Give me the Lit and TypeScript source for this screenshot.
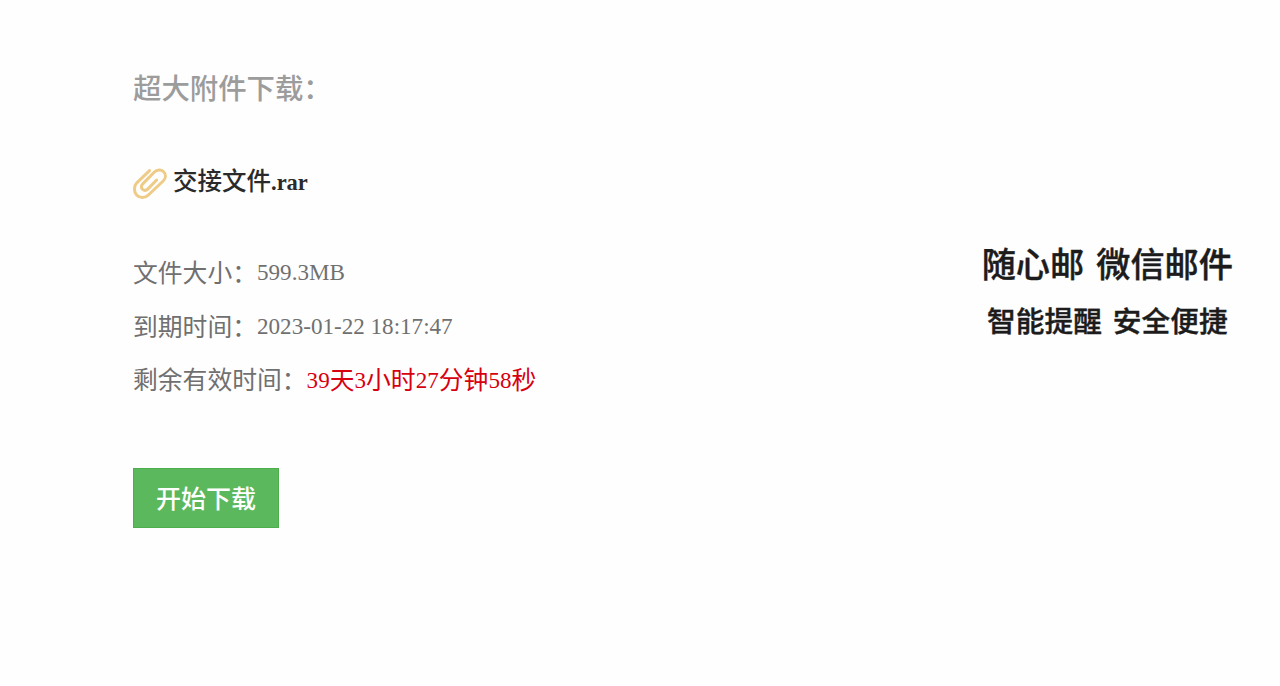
import { LitElement, html, css } from "lit";
import { customElement, property } from "lit/decorators.js";

@customElement("clip-icon")
export class ClipIcon extends LitElement {
  static styles = css`
    :host {
      display: block;
      width: 34px;
      height: 32px;
    }
    svg {
      display: block;
      width: 100%;
      height: 100%;
      fill: none;
      stroke: #eecb86;
      stroke-width: 3;
      stroke-linecap: round;
      stroke-linejoin: round;
    }
  `;

  render() {
    return html`<svg viewBox="0 0 34 32">
      <path
        d="M16.5 2.6L3.8 14.8C0.8 17.9 0.7 23.8 3.6 27C6.6 30.2 12.2 30.2 15.4 27L30.2 13C33 10.2 33.1 6.3 30.6 3.8C28 1.2 24 1.4 21.4 4L10 15.6C8 17.7 8 20 9.6 21.4C11.2 22.8 13.3 22.6 15 20.9L23.6 12"
      />
    </svg>`;
  }
}

@customElement("info-row")
export class InfoRow extends LitElement {
  @property() label = "";

  static styles = css`
    :host {
      display: flex;
      height: 53.5px;
      line-height: 53.5px;
      white-space: nowrap;
    }
  `;

  render() {
    return html`<span>${this.label}：</span><slot></slot>`;
  }
}

@customElement("app-root")
export class AppRoot extends LitElement {
  static styles = css`
    :host {
      display: flex;
      justify-content: space-between;
      box-sizing: border-box;
      height: 686px;
      padding: 65px 47px 0 133px;
      background: #fefefe;
      color: #707070;
      font-family: "Liberation Serif", "Noto Sans CJK SC", serif;
      font-size: 24.8px;
    }
    h1 {
      margin: 0;
      height: 50px;
      line-height: 50px;
      font-size: 28.4px;
      font-weight: 500;
      color: #9c9c9c;
    }
    .file {
      display: flex;
      align-items: center;
      gap: 6px;
      margin-top: 42px;
      height: 50px;
      line-height: 50px;
      font-size: 24.5px;
      font-weight: 500;
      color: #2a2a2a;
    }
    clip-icon {
      margin-top: 4px;
    }
    .ext {
      font-size: 22.5px;
      font-weight: 700;
    }
    .info {
      margin-top: 40px;
    }
    .num {
      position: relative;
      top: -1px;
      font-size: 23.1px;
    }
    .left {
      color: #d7000f;
    }
    button {
      display: block;
      margin-top: 60px;
      width: 146px;
      height: 60px;
      padding: 0 0 2px;
      border: 1px solid #4cae4c;
      background: #5cb85c;
      color: #fff;
      font: inherit;
      font-weight: 500;
      font-size: 25px;
    }
    aside {
      display: flex;
      flex-direction: column;
      align-items: center;
      padding-top: 172px;
      color: #1c1c1c;
      font-family: "Noto Sans CJK SC", sans-serif;
      font-weight: 500;
      -webkit-text-stroke: 0.4px #1c1c1c;
      white-space: nowrap;
    }
    aside div {
      display: flex;
    }
    .slogan {
      gap: 12px;
      height: 50px;
      line-height: 50px;
      font-size: 34.2px;
    }
    .sub {
      gap: 11px;
      margin-top: 10px;
      height: 46px;
      line-height: 46px;
      font-size: 28.7px;
    }
  `;

  private num(text: string) {
    return html`<span class="num">${text}</span>`;
  }

  render() {
    return html`
      <main>
        <h1>超大附件下载：</h1>
        <div class="file">
          <clip-icon></clip-icon>
          <span>交接文件<span class="ext">.rar</span></span>
        </div>
        <div class="info">
          <info-row label="文件大小">${this.num("599.3MB")}</info-row>
          <info-row label="到期时间">${this.num("2023-01-22 18:17:47")}</info-row>
          <info-row label="剩余有效时间">
            <span class="left"
              >${this.num("39")}天${this.num("3")}小时${this.num("27")}分钟${this.num("58")}秒</span
            >
          </info-row>
        </div>
        <button>开始下载</button>
      </main>
      <aside>
        <div class="slogan"><span>随心邮</span><span>微信邮件</span></div>
        <div class="sub"><span>智能提醒</span><span>安全便捷</span></div>
      </aside>
    `;
  }
}
